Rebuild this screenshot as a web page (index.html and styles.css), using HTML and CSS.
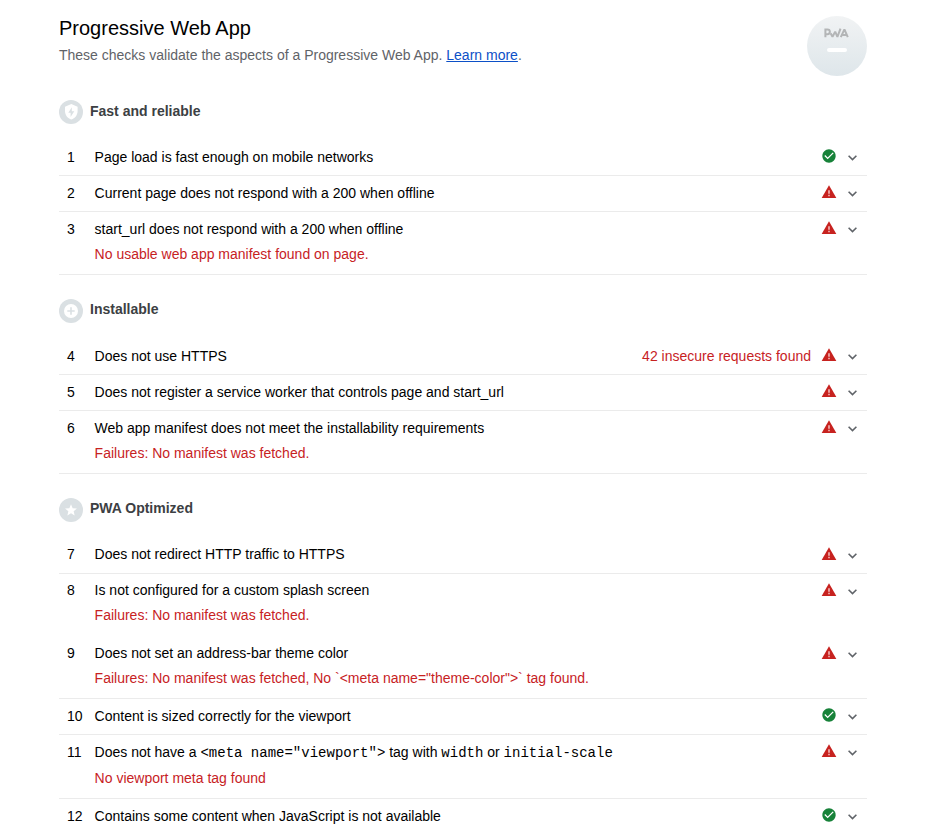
FILE: index.html
```html
<!DOCTYPE html>
<html lang="en">
<head>
<meta charset="utf-8">
<title>Progressive Web App</title>
<link rel="stylesheet" href="styles.css">
</head>
<body>
<svg class="defs" aria-hidden="true">
  <symbol id="pass" viewBox="0 0 48 48"><path fill="#178239" d="M24 4C12.95 4 4 12.95 4 24s8.95 20 20 20 20-8.95 20-20S35.04 4 24 4z"/><path fill="#fff" d="M20 34L10 24l2.83-2.83L20 28.34l15.17-15.17L38 16 20 34z"/></symbol>
  <symbol id="fail" viewBox="0 0 48 48"><path fill="#c7221f" d="M2 42h44L24 4 2 42z"/><path fill="#f3b9b8" d="M26.4 36.5h-4.8v-4.5h4.8v4.5zm0-7h-4.8V19h4.8v10.5z"/></symbol>
  <symbol id="chevron" viewBox="0 0 9 6"><path fill="none" stroke="#5f6368" stroke-width="1.6" d="M.6.8l3.9 3.8L8.4.8"/></symbol>
</svg>
<main class="category">
  <header class="header">
    <div class="intro">
      <h1 class="title">Progressive Web App</h1>
      <p class="description">These checks validate the aspects of a Progressive Web App. <a class="link" href="#">Learn more</a>.</p>
    </div>
    <svg class="gauge" viewBox="0 0 60 60">
      <defs><linearGradient id="disc" x1="0" y1="0" x2="0" y2="1"><stop offset="0" stop-color="#f1f3f4"/><stop offset="1" stop-color="#dee6ea"/></linearGradient></defs>
      <circle cx="30" cy="30" r="30" fill="url(#disc)"/>
      <g fill="none" stroke="#b3b5b6" stroke-width="2">
        <path d="M18.4 21.2v-7.7h2.1a2.1 2.1 0 0 1 0 4.7h-2.1"/>
        <path stroke-linejoin="bevel" d="M23.6 17.2l1.9 3.6 2.7-5.2 2.2 5.2 3.1-8.2"/>
        <path stroke-linejoin="bevel" d="M33.8 21.1l3.6-7.8 3.4 7.8M35.6 19h4"/>
      </g>
      <rect x="20" y="32" width="20" height="4" rx="2" fill="#fff"/>
    </svg>
  </header>

  <section class="group">
    <h2 class="group-title first"><svg class="badge" viewBox="0 0 24 24"><circle cx="12" cy="12" r="12" fill="#dae0e3"/><path fill="#fff" d="M12.3 4l6.3 2.8v4.3c0 3.9-2.7 7.6-6.3 8.5-3.6-.9-6.3-4.6-6.3-8.5V6.8L12.3 4z"/><path fill="#dae0e3" d="M12.8 7.2v4h2.5l-3.7 5.7v-4.2H9.3z"/></svg>Fast and reliable</h2>
    <div class="audit"><span class="index">1</span><div class="text">Page load is fast enough on mobile networks</div><svg class="state"><use href="#pass"/></svg><svg class="chevron"><use href="#chevron"/></svg></div>
    <div class="audit"><span class="index">2</span><div class="text">Current page does not respond with a 200 when offline</div><svg class="state"><use href="#fail"/></svg><svg class="chevron"><use href="#chevron"/></svg></div>
    <div class="audit"><span class="index">3</span><div class="text">start_url does not respond with a 200 when offline<div class="reason">No usable web app manifest found on page.</div></div><svg class="state"><use href="#fail"/></svg><svg class="chevron"><use href="#chevron"/></svg></div>
  </section>

  <section class="group">
    <h2 class="group-title"><svg class="badge" viewBox="0 0 24 24"><circle cx="12" cy="12" r="12" fill="#dae0e3"/><circle cx="12" cy="12" r="7" fill="#fff"/><path fill="#dae0e3" d="M11.2 8.3h1.6v2.9h2.9v1.6h-2.9v2.9h-1.6v-2.9H8.3v-1.6h2.9z"/></svg>Installable</h2>
    <div class="audit"><span class="index">4</span><div class="text">Does not use HTTPS</div><span class="display">42 insecure requests found</span><svg class="state"><use href="#fail"/></svg><svg class="chevron"><use href="#chevron"/></svg></div>
    <div class="audit"><span class="index">5</span><div class="text">Does not register a service worker that controls page and start_url</div><svg class="state"><use href="#fail"/></svg><svg class="chevron"><use href="#chevron"/></svg></div>
    <div class="audit"><span class="index">6</span><div class="text">Web app manifest does not meet the installability requirements<div class="reason">Failures: No manifest was fetched.</div></div><svg class="state"><use href="#fail"/></svg><svg class="chevron"><use href="#chevron"/></svg></div>
  </section>

  <section class="group">
    <h2 class="group-title"><svg class="badge" viewBox="0 0 24 24"><circle cx="12" cy="12" r="12" fill="#dae0e3"/><path fill="#fff" d="M12 6.2l1.65 4 4.3.35-3.3 2.8 1 4.2L12 15.3l-3.65 2.25 1-4.2-3.3-2.8 4.3-.35z"/></svg>PWA Optimized</h2>
    <div class="audit raised"><span class="index">7</span><div class="text">Does not redirect HTTP traffic to HTTPS</div><svg class="state"><use href="#fail"/></svg><svg class="chevron"><use href="#chevron"/></svg></div>
    <div class="audit raised plain"><span class="index">8</span><div class="text">Is not configured for a custom splash screen<div class="reason">Failures: No manifest was fetched.</div></div><svg class="state"><use href="#fail"/></svg><svg class="chevron"><use href="#chevron"/></svg></div>
    <div class="audit raised"><span class="index">9</span><div class="text">Does not set an address-bar theme color<div class="reason">Failures: No manifest was fetched, No `&lt;meta name="theme-color"&gt;` tag found.</div></div><svg class="state"><use href="#fail"/></svg><svg class="chevron"><use href="#chevron"/></svg></div>
    <div class="audit"><span class="index">10</span><div class="text">Content is sized correctly for the viewport</div><svg class="state"><use href="#pass"/></svg><svg class="chevron"><use href="#chevron"/></svg></div>
    <div class="audit with-code"><span class="index">11</span><div class="text">Does not have a <code>&lt;meta name="viewport"&gt;</code> tag with <code>width</code> or <code>initial-scale</code><div class="reason">No viewport meta tag found</div></div><svg class="state"><use href="#fail"/></svg><svg class="chevron"><use href="#chevron"/></svg></div>
    <div class="audit last"><span class="index">12</span><div class="text">Contains some content when JavaScript is not available</div><svg class="state"><use href="#pass"/></svg><svg class="chevron"><use href="#chevron"/></svg></div>
  </section>
</main>
</body>
</html>
```
FILE: styles.css
```css
* { box-sizing: border-box; }
body {
  margin: 0;
  background: #fff;
  color: #000;
  font: 14px/20px "Liberation Sans", Arial, sans-serif;
}
.defs { display: none; }
.category { width: 808px; margin-left: 59px; padding-top: 16px; }
.header { display: flex; justify-content: space-between; height: 84px; }
.title { margin: 0; font-size: 20px; font-weight: 400; line-height: 24px; }
.description { margin: 5px 0 0; color: #5f6368; }
.link { color: #0c50c7; }
.gauge { width: 60px; height: 60px; }
.group + .group { margin-top: 24px; }
.group-title {
  display: flex;
  gap: 7px;
  height: 40px;
  margin: 0;
  font-size: 14px;
  font-weight: 700;
  line-height: 20px;
  color: #3c4043;
}
.first { line-height: 22px; }
.badge { width: 24px; height: 24px; }
.audit {
  display: flex;
  padding: 7px 8px 8px;
  border-bottom: 1px solid #ebebeb;
}
.index { width: 27.6px; flex: none; }
.text { flex: 1; }
.reason { height: 27px; padding-top: 5px; color: #c7221f; }
.display { color: #c7221f; margin-right: 10px; }
.state { width: 16px; height: 16px; margin: 1px 11px 0 0; flex: none; }
.chevron { width: 9px; height: 6px; margin: 8px 2px 0 0; flex: none; }
.raised { padding: 6px 8px 9px; }
.raised .reason { height: 26px; }
.raised .state { margin-top: 2px; }
.raised .chevron { margin-top: 9px; }
.plain { border-bottom: 0; padding-bottom: 11px; }
.with-code .reason { height: 28px; padding-top: 6px; }
.last { height: 28px; padding-bottom: 0; border-bottom: 0; }
code { font: 14px/14px "Liberation Mono", "Courier New", monospace; }
```
